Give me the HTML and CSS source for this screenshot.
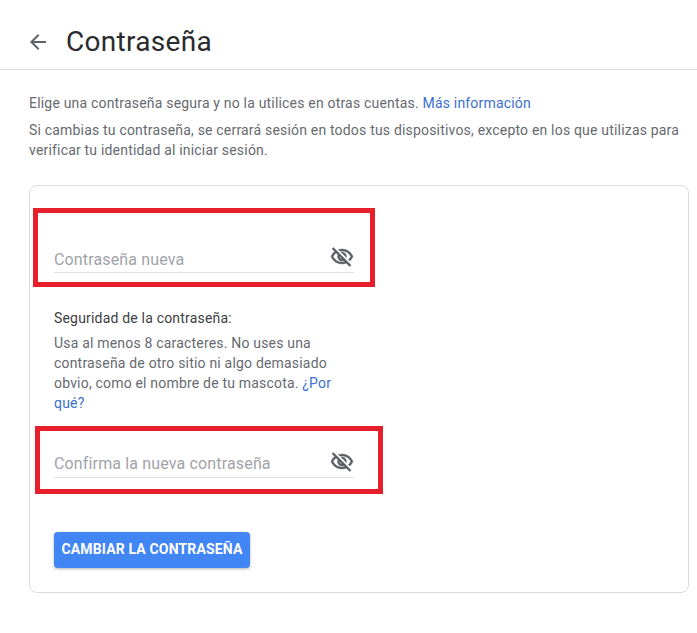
FILE: index.html
```html
<!DOCTYPE html>
<html lang="es">
<head>
<meta charset="utf-8">
<title>Contraseña</title>
<link rel="stylesheet" href="styles.css">
</head>
<body>
<header class="header">
  <svg class="back" viewBox="0 0 24 24" width="24" height="24"><path d="M20 11H7.83l5.59-5.59L12 4l-8 8 8 8 1.41-1.41L7.83 13H20z"/></svg>
  <h1 class="title">Contraseña</h1>
</header>
<main class="content">
  <p class="intro">Elige una contraseña segura y no la utilices en otras cuentas. <a href="#">Más información</a></p>
  <p class="intro second">Si cambias tu contraseña, se cerrará sesión en todos tus dispositivos, excepto en los que utilizas para verificar tu identidad al iniciar sesión.</p>
  <section class="card">
    <div class="form">
      <div class="field first">
        <span class="placeholder">Contraseña nueva</span>
        <svg class="eye" viewBox="0 0 24 24" width="24" height="24"><path d="M12 6c3.79 0 7.17 2.13 8.82 5.5-.59 1.22-1.42 2.27-2.41 3.12l1.41 1.41c1.39-1.23 2.49-2.77 3.18-4.53C21.27 7.11 17 4 12 4c-1.27 0-2.49.2-3.64.57l1.65 1.65C10.66 6.09 11.32 6 12 6zm-1.07 1.14L13 9.21c.57.25 1.03.71 1.28 1.28l2.07 2.07c.08-.34.14-.7.14-1.07C16.5 9.01 14.48 7 12 7c-.37 0-.72.05-1.07.14zM2.01 3.87l2.68 2.68C3.06 7.83 1.77 9.53 1 11.5 2.73 15.89 7 19 12 19c1.52 0 2.98-.29 4.32-.82l3.42 3.42 1.41-1.41L3.42 2.45 2.01 3.87zm7.5 7.5l2.61 2.61c-.04.01-.08.02-.12.02-1.38 0-2.5-1.12-2.5-2.5 0-.05.01-.08.01-.13zm-3.4-3.4l1.75 1.75c-.23.55-.36 1.15-.36 1.78 0 2.48 2.02 4.5 4.5 4.5.63 0 1.23-.13 1.77-.36l.98.98c-.88.24-1.8.38-2.75.38-3.79 0-7.17-2.13-8.82-5.5.7-1.43 1.72-2.61 2.93-3.53z"/></svg>
      </div>
      <h2 class="strength">Seguridad de la contraseña:</h2>
      <p class="hint">Usa al menos 8 caracteres. No uses una contraseña de otro sitio ni algo demasiado obvio, como el nombre de tu mascota. <a href="#">¿Por qué?</a></p>
      <div class="field confirm">
        <span class="placeholder">Confirma la nueva contraseña</span>
        <svg class="eye" viewBox="0 0 24 24" width="24" height="24"><path d="M12 6c3.79 0 7.17 2.13 8.82 5.5-.59 1.22-1.42 2.27-2.41 3.12l1.41 1.41c1.39-1.23 2.49-2.77 3.18-4.53C21.27 7.11 17 4 12 4c-1.27 0-2.49.2-3.64.57l1.65 1.65C10.66 6.09 11.32 6 12 6zm-1.07 1.14L13 9.21c.57.25 1.03.71 1.28 1.28l2.07 2.07c.08-.34.14-.7.14-1.07C16.5 9.01 14.48 7 12 7c-.37 0-.72.05-1.07.14zM2.01 3.87l2.68 2.68C3.06 7.83 1.77 9.53 1 11.5 2.73 15.89 7 19 12 19c1.52 0 2.98-.29 4.32-.82l3.42 3.42 1.41-1.41L3.42 2.45 2.01 3.87zm7.5 7.5l2.61 2.61c-.04.01-.08.02-.12.02-1.38 0-2.5-1.12-2.5-2.5 0-.05.01-.08.01-.13zm-3.4-3.4l1.75 1.75c-.23.55-.36 1.15-.36 1.78 0 2.48 2.02 4.5 4.5 4.5.63 0 1.23-.13 1.77-.36l.98.98c-.88.24-1.8.38-2.75.38-3.79 0-7.17-2.13-8.82-5.5.7-1.43 1.72-2.61 2.93-3.53z"/></svg>
      </div>
      <button class="submit" type="button">CAMBIAR LA CONTRASEÑA</button>
    </div>
  </section>
</main>
<div class="mark mark-one"></div>
<div class="mark mark-two"></div>
</body>
</html>
```
FILE: styles.css
```css
* { box-sizing: border-box; }
html, body { margin: 0; padding: 0; }
body {
  position: relative;
  min-height: 633px;
  background: #fff;
  font-family: Roboto, "Liberation Sans", sans-serif;
  color: #666a6f;
  overflow: hidden;
}
.header {
  display: flex;
  align-items: center;
  height: 70px;
  padding: 14px 0 0 26px;
  gap: 16px;
  border-bottom: 1px solid #dadce0;
}
.back { fill: #5f6368; flex: none; }
.title {
  margin: 0;
  font-size: 28px;
  font-weight: 400;
  letter-spacing: .3px;
  color: #2a2b2e;
  line-height: 32px;
}
.content { padding: 23px 8px 0 29px; }
.intro { margin: 0; font-size: 14px; line-height: 20px; letter-spacing: .19px; }
.second { margin-top: 7px; }
a { color: #3b6fd0; text-decoration: none; }
.card {
  margin-top: 25px;
  height: 408px;
  border: 1px solid #dadce0;
  border-radius: 8px;
  padding: 0 24px;
}
.form { width: 300px; }
.field {
  display: flex;
  align-items: flex-end;
  justify-content: space-between;
  height: 32px;
  border-bottom: 1px solid #dfe1e3;
}
.first { margin-top: 55px; }
.placeholder {
  font-size: 16px;
  line-height: 24px;
  letter-spacing: .15px;
  color: #a0a4a8;
}
.confirm .placeholder { margin-bottom: 1px; }
.eye {
  flex: none;
  margin-bottom: 3px;
  fill: #5a5e63;
  stroke: #5a5e63;
  stroke-width: .4;
}
.strength {
  margin: 35px 0 0;
  font-size: 14px;
  font-weight: 400;
  line-height: 20px;
  letter-spacing: .19px;
  color: #3c4043;
}
.hint { margin: 5px 0 0; font-size: 14px; line-height: 20px; letter-spacing: .19px; }
.confirm { margin-top: 33px; }
.submit {
  display: block;
  margin-top: 54px;
  height: 36px;
  width: 196px;
  padding: 0 0 2px;
  border: 0;
  border-radius: 4px;
  background: #4285f4;
  color: #fff;
  font: 700 14px/34px Roboto, "Liberation Sans", sans-serif;
  letter-spacing: .15px;
  box-shadow: 0 1px 3px rgba(60, 64, 67, .4);
}
.mark {
  position: absolute;
  border: 5px solid #e61f2b;
}
.mark-one { left: 33px; top: 208px; width: 342px; height: 79px; }
.mark-two { left: 35px; top: 426px; width: 348px; height: 68px; }
```
